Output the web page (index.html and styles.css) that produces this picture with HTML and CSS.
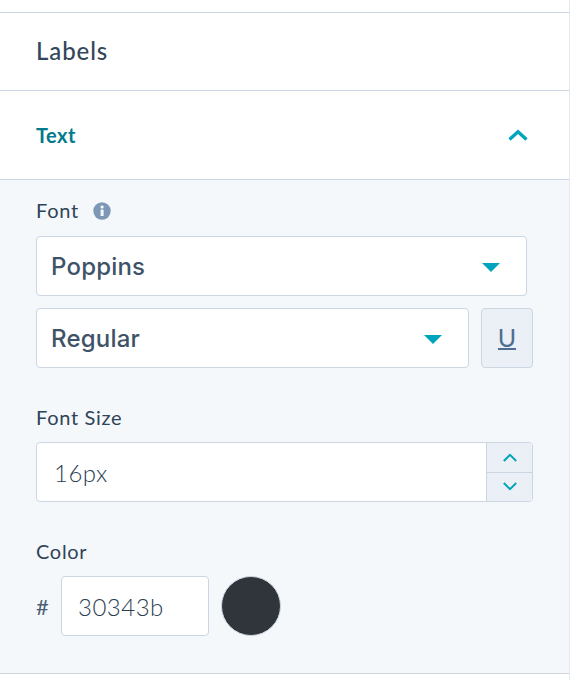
FILE: index.html
```html
<!DOCTYPE html>
<html lang="en">
<head>
<meta charset="utf-8">
<title>Text settings</title>
<link rel="stylesheet" href="styles.css">
</head>
<body>
<div class="panel">
  <div class="section section-labels"><span class="section-title">Labels</span></div>
  <div class="section section-text">
    <span class="section-title active">Text</span>
    <svg class="chevron" width="20" height="12" viewBox="0 0 20 12"><path d="M1.5 10.5 L10 2.8 L18.5 10.5" fill="none" stroke="#00a4bd" stroke-width="3.4"/></svg>
  </div>
  <div class="body">
    <div class="label-row">
      <span class="label">Font</span>
      <svg class="info" width="18" height="18" viewBox="0 0 18 18"><circle cx="9" cy="9" r="8.7" fill="#7c98b6"/><rect x="7.6" y="7.6" width="3" height="6.4" fill="#f5f8fa"/><rect x="7.6" y="3.6" width="3" height="2.8" rx="1.2" fill="#f5f8fa"/></svg>
    </div>
    <div class="select select-font">
      <span class="select-value">Poppins</span>
      <span class="caret"></span>
    </div>
    <div class="style-row">
      <div class="select select-style">
        <span class="select-value">Regular</span>
        <span class="caret"></span>
      </div>
      <button class="underline-btn" type="button"><span class="u">U</span></button>
    </div>
    <div class="label size-label">Font Size</div>
    <div class="number">
      <span class="number-value">16px</span>
      <div class="stepper">
        <div class="step step-up"><svg width="14" height="9" viewBox="0 0 14 9"><path d="M.8 8 L7 1.8 L13.2 8" fill="none" stroke="#00a4bd" stroke-width="2"/></svg></div>
        <div class="step"><svg width="14" height="9" viewBox="0 0 14 9"><path d="M.8 1 L7 7.2 L13.2 1" fill="none" stroke="#00a4bd" stroke-width="2"/></svg></div>
      </div>
    </div>
    <div class="label color-label">Color</div>
    <div class="color-row">
      <span class="hash">#</span>
      <div class="hex">30343b</div>
      <span class="swatch"></span>
    </div>
  </div>
</div>
</body>
</html>
```
FILE: styles.css
```css
* { box-sizing: border-box; }
html, body { margin: 0; padding: 0; background: #fff; }
body { width: 573px; height: 680px; overflow: hidden; font-family: "Lato", "Liberation Sans", sans-serif; color: #33475b; }
.panel { width: 570px; height: 680px; padding-top: 12px; border-right: 1px solid #e3e9f2; }
.section { display: flex; align-items: center; justify-content: space-between; background: #fff; border-top: 1px solid #cbd6e2; padding: 0 41px 0 36px; }
.section-labels { height: 78px; padding-bottom: 2px; }
.section-text { height: 89px; }
.section-title { font-size: 24px; font-weight: 500; letter-spacing: .9px; }
.section-title.active { font-size: 20px; font-weight: 700; letter-spacing: .5px; color: #007a8c; }
.chevron { display: block; }
.body { background: #f5f8fa; border-top: 1px solid #cbd6e2; border-bottom: 1px solid #cfd4da; height: 495px; padding: 18px 36px 0 36px; }
.label-row { display: flex; align-items: center; gap: 14px; height: 24px; }
.label { font-size: 20px; font-weight: 400; line-height: 24px; letter-spacing: .7px; color: #2f4358; }
.info { display: block; margin-top: 2px; }
.select { height: 60px; background: #fff; border: 1px solid #cbd6e2; border-radius: 4px; display: flex; align-items: center; justify-content: space-between; padding: 0 26px 0 14px; }
.select-font { width: 491px; margin-top: 14px; }
.select-style { width: 433px; }
.select-value { font-family: "Inter", sans-serif; font-size: 24px; font-weight: 500; letter-spacing: .2px; color: #3e5368; }
.caret { width: 0; height: 0; border-left: 9px solid transparent; border-right: 9px solid transparent; border-top: 9px solid #00a4bd; margin-top: 3px; }
.style-row { display: flex; gap: 12px; margin-top: 12px; }
.underline-btn { width: 52px; height: 60px; padding: 0; background: #eaf0f6; border: 1px solid #cbd6e2; border-radius: 4px; font-family: "Lato", sans-serif; display: flex; align-items: center; justify-content: center; }
.u { display: block; font-size: 25px; line-height: 21px; color: #506e91; border-bottom: 2px solid #506e91; }
.size-label { margin-top: 37px; }
.number { width: 497px; height: 60px; margin-top: 13px; background: #fff; border: 1px solid #cbd6e2; border-radius: 4px; display: flex; align-items: center; justify-content: space-between; padding-left: 17px; overflow: hidden; }
.number-value { font-size: 24px; font-weight: 300; color: #2b3e52; letter-spacing: .5px; }
.stepper { width: 46px; height: 100%; background: #eaf0f6; border-left: 1px solid #cbd6e2; display: flex; flex-direction: column; }
.step { flex: 1; display: flex; align-items: center; justify-content: center; }
.step-up { border-bottom: 1px solid #cbd6e2; }
.color-label { margin-top: 37px; }
.color-row { display: flex; align-items: center; margin-top: 13px; }
.hash { font-size: 22px; width: 25px; color: #4a5f75; }
.hex { width: 148px; height: 60px; background: #fff; border: 1px solid #cbd6e2; border-radius: 4px; display: flex; align-items: center; padding-left: 16px; font-size: 24px; font-weight: 300; color: #2b3e52; letter-spacing: .5px; }
.swatch { width: 60px; height: 60px; border-radius: 50%; background: #30343b; border: 1px solid #cbd6e2; margin-left: 12px; }
```
